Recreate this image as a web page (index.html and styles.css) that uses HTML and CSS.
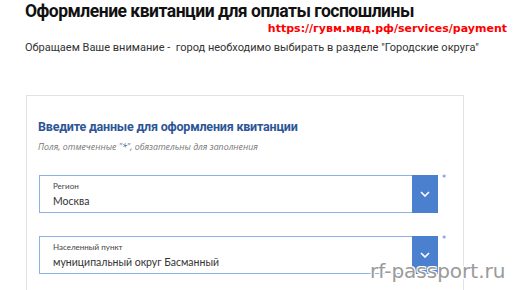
FILE: index.html
```html
<!DOCTYPE html>
<html lang="ru">
<head>
<meta charset="utf-8">
<link rel="stylesheet" href="styles.css">
</head>
<body>
<div class="page">
  <h1 class="title">Оформление квитанции для оплаты госпошлины</h1>
  <div class="url">https://гувм.мвд.рф/services/payment</div>
  <p class="notice">Обращаем Ваше внимание -&nbsp; город необходимо выбирать в разделе "Городские округа"</p>
  <div class="card">
    <h2 class="card-title">Введите данные для оформления квитанции</h2>
    <p class="hint">Поля, отмеченные "<span class="star">*</span>", обязательны для заполнения</p>
    <div class="field-row">
      <div class="field">
        <div class="field-body">
          <div class="field-label">Регион</div>
          <div class="field-value">Москва</div>
        </div>
        <div class="field-btn"><svg width="10" height="6" viewBox="0 0 10 6"><path d="M1 1 L5 5 L9 1" fill="none" stroke="#fff" stroke-width="1.6"/></svg></div>
      </div>
      <span class="req">*</span>
    </div>
    <div class="field-row">
      <div class="field">
        <div class="field-body">
          <div class="field-label">Населенный пункт</div>
          <div class="field-value">муниципальный округ Басманный</div>
        </div>
        <div class="field-btn"><svg width="10" height="6" viewBox="0 0 10 6"><path d="M1 1 L5 5 L9 1" fill="none" stroke="#fff" stroke-width="1.6"/></svg></div>
      </div>
      <span class="req">*</span>
    </div>
  </div>
  <div class="watermark">rf-passport.ru</div>
</div>
</body>
</html>
```
FILE: styles.css
```css
html, body {
  margin: 0;
  padding: 0;
  background: #fff;
  overflow: hidden;
}
.page {
  position: relative;
  width: 516px;
  height: 290px;
  overflow: hidden;
  padding-left: 25px;
  box-sizing: border-box;
}
.title {
  margin: 0;
  padding-top: 0;
  font-family: "Roboto", sans-serif;
  font-weight: 700;
  font-size: 17.5px;
  letter-spacing: -0.5px;
  line-height: 23px;
  color: #111;
  white-space: nowrap;
}
.url {
  font-family: "DejaVu Sans", sans-serif;
  font-weight: 700;
  font-size: 11px;
  line-height: 13px;
  color: #f00;
  text-align: right;
  padding-right: 9px;
  margin-top: -1px;
}
.notice {
  margin: 6px 0 0;
  font-family: "Roboto", sans-serif;
  font-size: 11px;
  line-height: 14px;
  color: #333;
  white-space: nowrap;
}
.card {
  margin-top: 40px;
  margin-left: 1px;
  width: 438px;
  height: 300px;
  border: 1px solid #e2e2e2;
  box-sizing: border-box;
  padding: 22px 0 0 11px;
}
.card-title {
  margin: 0;
  font-family: "Roboto", sans-serif;
  font-weight: 700;
  font-size: 12.5px;
  letter-spacing: -0.2px;
  line-height: 18px;
  color: #2c5597;
  white-space: nowrap;
}
.hint {
  margin: 5px 0 0;
  font-family: "Open Sans", sans-serif;
  font-style: italic;
  font-size: 8.8px;
  line-height: 12px;
  color: #777;
}
.star {
  color: #2c5597;
}
.field-row {
  display: flex;
  align-items: flex-start;
  margin-top: 22px;
  margin-left: 1px;
}
.field-row + .field-row {
  margin-top: 23px;
}
.field {
  display: flex;
  width: 399px;
  height: 38px;
  border: 1px solid #8cb1e2;
  box-sizing: border-box;
}
.field-body {
  flex: 1;
  padding: 5px 0 0 13px;
  font-family: "Lato", sans-serif;
}
.field-label {
  font-size: 8px;
  line-height: 10px;
  color: #444;
}
.field-value {
  font-size: 10.5px;
  line-height: 16px;
  color: #333;
  margin-top: 2px;
}
.field-btn {
  width: 26px;
  margin: -1px -1px -1px 0;
  background: #4b80cf;
  display: flex;
  align-items: center;
  justify-content: center;
}
.req {
  font-family: "DejaVu Sans", sans-serif;
  font-size: 8px;
  line-height: 8px;
  color: #4b80cf;
  margin-left: 4px;
}
.watermark {
  position: absolute;
  left: 370px;
  top: 259px;
  font-family: "DejaVu Sans", sans-serif;
  font-size: 20px;
  color: #9a9a9a;
  text-shadow: 1px 1px 0 #fff, -1px -1px 0 #fff, 1px -1px 0 #fff, -1px 1px 0 #fff;
}
```
